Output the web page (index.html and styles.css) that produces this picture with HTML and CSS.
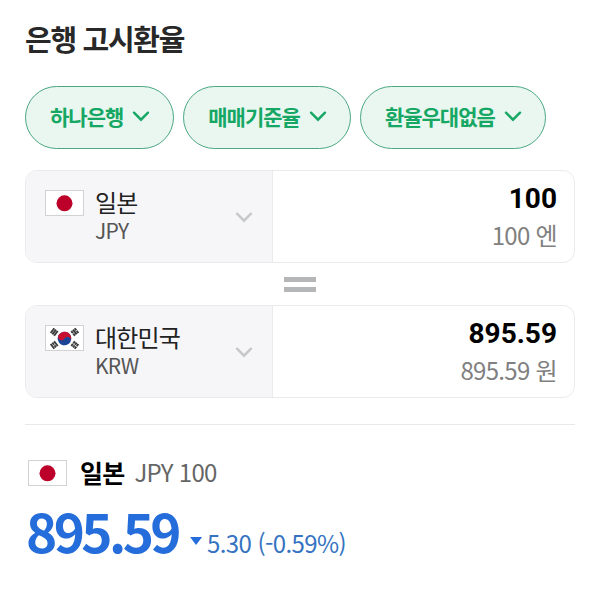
FILE: index.html
```html
<!DOCTYPE html>
<html lang="ko">
<head>
    <meta charset="UTF-8">
    <meta name="viewport" content="width=device-width, initial-scale=1.0">
    <title>은행 고시환율</title>
    <link rel="stylesheet" href="styles.css">
</head>
<body>
    <main class="container">
        <h1>은행 고시환율</h1>

        <div class="filters">
            <button class="filter-btn">하나은행
                <svg class="arrow" viewBox="0 0 18 11"><path d="M2 1.7l7 7 7-7"/></svg>
            </button>
            <button class="filter-btn">매매기준율
                <svg class="arrow" viewBox="0 0 18 11"><path d="M2 1.7l7 7 7-7"/></svg>
            </button>
            <button class="filter-btn">환율우대없음
                <svg class="arrow" viewBox="0 0 18 11"><path d="M2 1.7l7 7 7-7"/></svg>
            </button>
        </div>

        <div class="exchange-box">
            <div class="currency">
                <svg class="flag" viewBox="0 0 39 26">
                    <rect class="flag-bg" x=".5" y=".5" width="38" height="25"/>
                    <circle cx="19.5" cy="13.3" r="8" fill="#bc0029"/>
                </svg>
                <div class="currency-text">
                    <span class="country">일본</span>
                    <span class="code">JPY</span>
                </div>
                <svg class="arrow" viewBox="0 0 18 11"><path d="M2 1.7l7 7 7-7"/></svg>
            </div>
            <div class="amount">
                <div class="amount-value">100</div>
                <div class="amount-unit">100 엔</div>
            </div>
        </div>

        <div class="equal"></div>

        <div class="exchange-box">
            <div class="currency">
                <svg class="flag" viewBox="0 0 39 26">
                    <rect class="flag-bg" x=".5" y=".5" width="38" height="25"/>
                    <g transform="rotate(30 19.5 13.5)">
                        <circle cx="19.5" cy="13.5" r="6.8" fill="#1c4596"/>
                        <path d="M12.7 13.5a6.8 6.8 0 0 1 13.6 0a3.4 3.4 0 0 0-6.8 0a3.4 3.4 0 0 1-6.8 0z" fill="#c8102e"/>
                    </g>
                    <!-- 건곤감리 -->
                    <g class="trigram">
                        <path transform="translate(9.2 7) rotate(-52)" d="M-3-2.2h6M-3 0h6M-3 2.2h6"/>
                        <path transform="translate(29.8 7) rotate(52)" d="M-3-2.2h2.7m.6 0h2.7M-3 0h6M-3 2.2h2.7m.6 0h2.7"/>
                        <path transform="translate(9.2 20) rotate(52)" d="M-3-2.2h6M-3 0h2.7m.6 0h2.7M-3 2.2h6"/>
                        <path transform="translate(29.8 20) rotate(-52)" d="M-3-2.2h2.7m.6 0h2.7M-3 0h2.7m.6 0h2.7M-3 2.2h2.7m.6 0h2.7"/>
                    </g>
                </svg>
                <div class="currency-text">
                    <span class="country">대한민국</span>
                    <span class="code">KRW</span>
                </div>
                <svg class="arrow" viewBox="0 0 18 11"><path d="M2 1.7l7 7 7-7"/></svg>
            </div>
            <div class="amount">
                <div class="amount-value">895.59</div>
                <div class="amount-unit">895.59 원</div>
            </div>
        </div>

        <section class="summary">
            <div class="summary-title">
                <svg class="flag" viewBox="0 0 39 26">
                    <rect class="flag-bg" x=".5" y=".5" width="38" height="25"/>
                    <circle cx="19.5" cy="13.3" r="8" fill="#bc0029"/>
                </svg>
                <h2>일본</h2>
                <span>JPY 100</span>
            </div>
            <div class="summary-rate">
                <strong>895.59</strong>
                <span class="down"></span>
                <span class="change">5.30 (-0.59%)</span>
            </div>
        </section>
    </main>
</body>
</html>
```
FILE: styles.css
```css
:root {
    --green: #16a765;
    --green-line: #4aa783;
    --green-bg: #e9f7f0;
    --blue: #256ddb;
    --line: #e9eaec;
}
* {
    box-sizing: border-box;
}
body {
    margin: 0;
    background-color: #fff;
    font-family: "Noto Sans CJK KR", sans-serif;
    color: #222;
}
.container {
    padding: 20px 25px 0;
}
h1 {
    margin: 0;
    font-size: 29px;
    font-weight: bold;
    line-height: 36px;
    letter-spacing: -1.3px;
    color: #282828;
}
.filters {
    display: flex;
    gap: 9px;
    margin-top: 30px;
}
.filter-btn {
    display: flex;
    align-items: center;
    gap: 9px;
    height: 63px;
    padding: 0 23px 3px 24px;
    border: 1.5px solid var(--green-line);
    border-radius: 32px;
    background-color: var(--green-bg);
    font-family: inherit;
    font-size: 21px;
    font-weight: bold;
    letter-spacing: -1px;
    color: var(--green);
    white-space: nowrap;
}
.arrow {
    flex: none;
    width: 18px;
    height: 11px;
    fill: none;
    stroke: currentColor;
    stroke-width: 2.4;
    stroke-linecap: round;
}
.exchange-box {
    display: flex;
    height: 93px;
    margin-top: 21px;
    border: 1px solid var(--line);
    border-radius: 12px;
    overflow: hidden;
}
.currency {
    display: flex;
    align-items: flex-start;
    width: 247px;
    padding: 19px 19px 0 19px;
    border-right: 1px solid var(--line);
    background-color: #f6f6f9;
}
.currency .arrow {
    margin: 22px 0 0 auto;
    color: #c6c7c9;
}
.flag {
    flex: none;
    width: 39px;
    height: 26px;
}
.flag-bg {
    fill: #fff;
    stroke: #d2d2d4;
}
.trigram {
    stroke: #3c3c3c;
    stroke-width: 1.9;
}
.currency-text {
    display: flex;
    flex-direction: column;
    margin: -1px 0 0 11px;
}
.country {
    font-size: 24px;
    line-height: 26px;
    letter-spacing: -0.8px;
}
.code {
    font-size: 21px;
    line-height: 30px;
    letter-spacing: -0.7px;
    color: #555;
}
.amount {
    flex: 1;
    padding: 11px 17px 0 0;
    text-align: right;
}
.amount-value {
    font-family: Roboto, sans-serif;
    font-size: 28px;
    font-weight: bold;
    line-height: 34px;
    color: #000;
}
.amount-unit {
    margin-top: 3px;
    font-size: 24px;
    line-height: 32px;
    letter-spacing: -0.7px;
    color: #808080;
}
.equal {
    width: 32px;
    height: 15px;
    margin: 14px auto -8px 259px;
    border-top: 5px solid #b5b6b8;
    border-bottom: 5px solid #b5b6b8;
}
.summary {
    margin-top: 26px;
    padding: 31px 0 0 3px;
    border-top: 1px solid #e9e9eb;
}
.summary-title {
    display: flex;
    align-items: center;
    height: 34px;
}
.summary-title h2 {
    margin: -2px 10px 0 13px;
    font-size: 25px;
    line-height: 32px;
    letter-spacing: -0.8px;
    color: #000;
}
.summary-title span {
    margin-top: -2px;
    font-size: 24px;
    line-height: 32px;
    letter-spacing: -0.7px;
    color: #666;
}
.summary-rate {
    display: flex;
    align-items: baseline;
    margin-left: -2px;
    color: var(--blue);
}
.summary-rate strong {
    font-size: 53px;
    line-height: 80px;
    letter-spacing: -3.6px;
}
.down {
    width: 12px;
    height: 8px;
    margin: 0 5px 0 12px;
    background-color: var(--blue);
    clip-path: polygon(0 0, 100% 0, 50% 100%);
    transform: translateY(-8px);
}
.change {
    font-size: 24px;
    letter-spacing: -0.6px;
    color: #3573c2;
}
```
